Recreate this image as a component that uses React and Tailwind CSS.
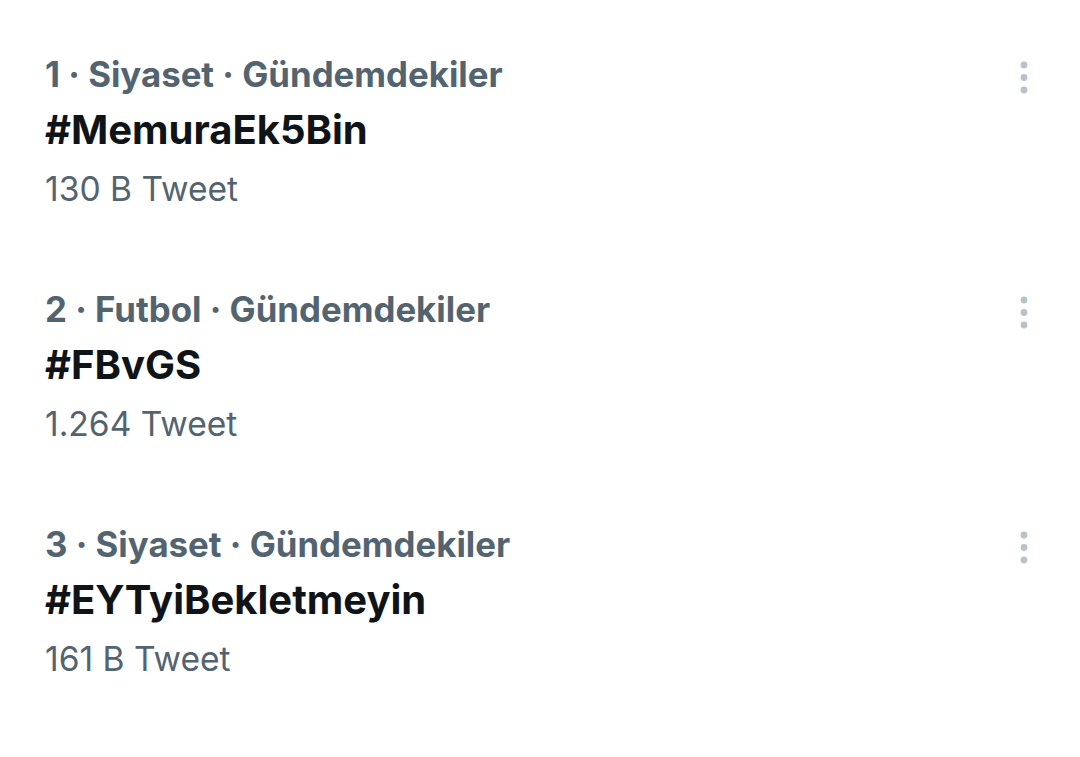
const trends = [
  { rank: 1, category: "Siyaset", tag: "#MemuraEk5Bin", count: "130 B Tweet" },
  { rank: 2, category: "Futbol", tag: "#FBvGS", count: "1.264 Tweet" },
  { rank: 3, category: "Siyaset", tag: "#EYTyiBekletmeyin", count: "161 B Tweet" },
];

function MoreIcon() {
  return (
    <svg width="14" height="40" viewBox="0 0 14 40" className="block">
      <circle cx="7" cy="7" r="3.4" fill="#b9c1c9" />
      <circle cx="7" cy="19.5" r="3.4" fill="#b9c1c9" />
      <circle cx="7" cy="32" r="3.4" fill="#b9c1c9" />
    </svg>
  );
}

function TrendRow({ trend }) {
  return (
    <div className="flex items-start justify-between pb-[74px] pl-[45px] pr-[49px]">
      <div className="flex flex-col">
        <span className="text-[34.8px] font-bold leading-[44px] text-[#536471]">
          {trend.rank} · {trend.category} · Gündemdekiler
        </span>
        <span className="text-[40px] font-bold leading-[68px] text-[#0f1419]">
          {trend.tag}
        </span>
        <span className="text-[33.6px] leading-[49px] text-[#536471]">
          {trend.count}
        </span>
      </div>
      <div className="pt-[6px]">
        <MoreIcon />
      </div>
    </div>
  );
}

export default function App() {
  return (
    <div
      className="h-[757px] w-[1080px] bg-white pt-[52px]"
      style={{ fontFamily: "Inter, 'Noto Sans', sans-serif" }}
    >
      {trends.map((t) => (
        <TrendRow key={t.rank} trend={t} />
      ))}
    </div>
  );
}
